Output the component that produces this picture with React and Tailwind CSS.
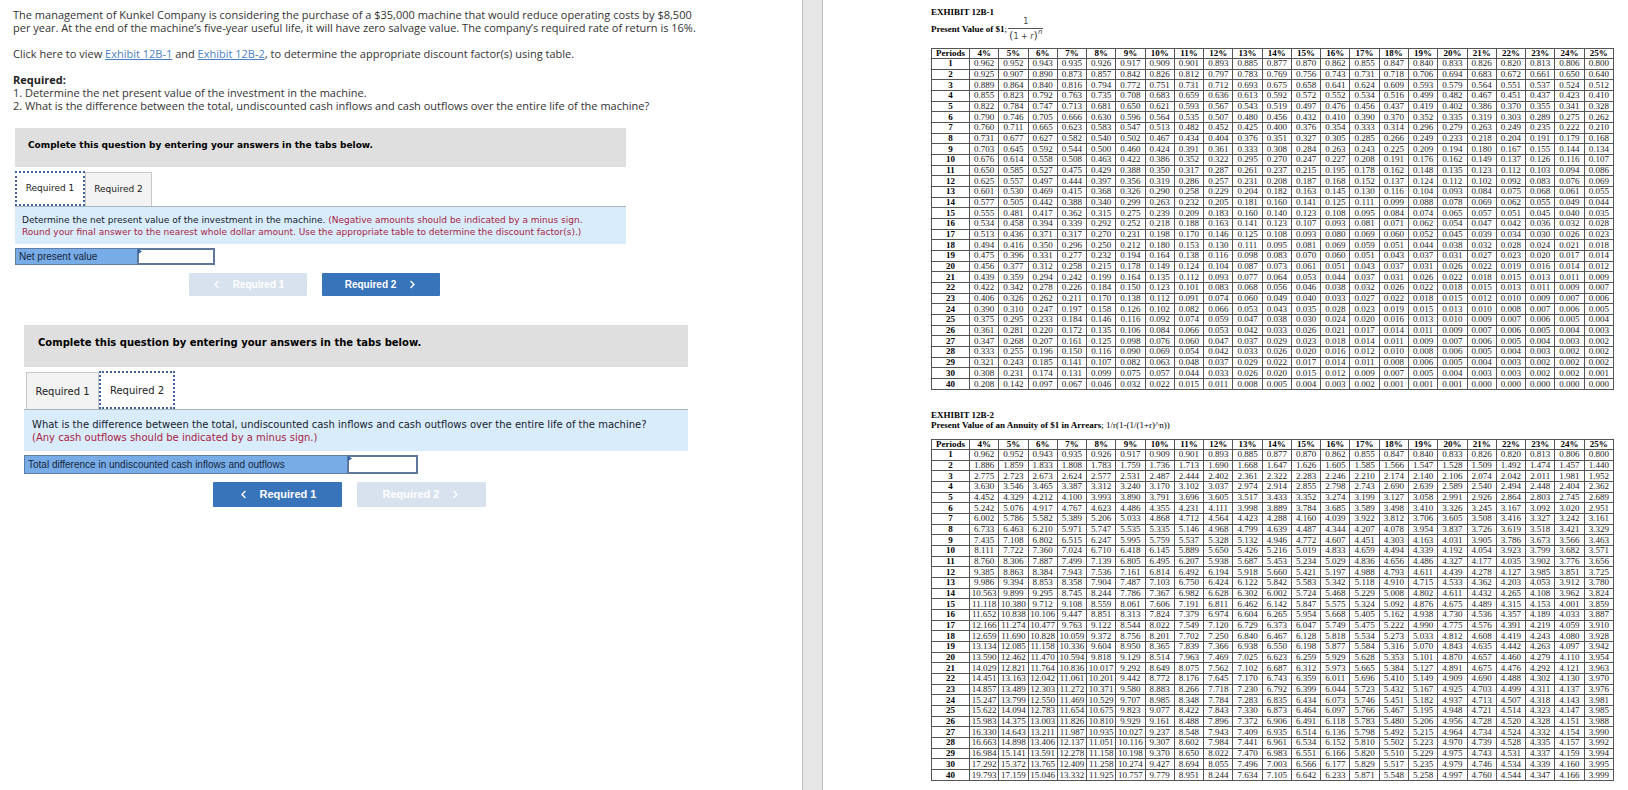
import React from 'react';
import clsx from 'clsx';
import { FaChevronLeft, FaChevronRight } from 'react-icons/fa';

const RATES = Array.from({ length: 22 }, (_, i) => i + 4);
const PERIODS = [...Array.from({ length: 30 }, (_, i) => i + 1), 40];

const presentValue = (rate, n) => 1 / Math.pow(1 + rate / 100, n);
const annuityValue = (rate, n) => (1 - presentValue(rate, n)) / (rate / 100);

const FactorTable = ({ label, factor }) => (
  <table aria-label={label} className="w-full h-[342px] table-fixed border-collapse border border-[#555] text-center text-[9px] leading-[9px] text-[#222]">
    <thead>
      <tr>
        <th className="w-[38px] border border-[#555] p-0 text-black">Periods</th>
        {RATES.map((rate) => (
          <th key={rate} className="border border-[#555] p-0 text-black">{rate}%</th>
        ))}
      </tr>
    </thead>
    <tbody>
      {PERIODS.map((n) => (
        <tr key={n}>
          <th className="border border-[#555] p-0 text-black">{n}</th>
          {RATES.map((rate) => (
            <td key={rate} className="border border-[#555] p-0">{factor(rate, n).toFixed(3)}</td>
          ))}
        </tr>
      ))}
    </tbody>
  </table>
);

const Tab = ({ active, large, children }) => (
  <button
    role="tab"
    aria-selected={active}
    className={clsx(
      'text-[#222]',
      large ? 'text-[10px]' : 'text-[9px]',
      active
        ? 'border-2 border-dotted border-[#3f62a0] bg-white'
        : 'border border-b-0 border-[#c8c8c8] bg-[#f3f3f3]',
      active && (large ? 'h-[38px] w-[76px]' : 'h-[35px] w-[70px]'),
      !active && (large ? 'h-[37px] w-[73px]' : 'h-[34px] w-[67px]')
    )}
  >
    {children}
  </button>
);

const NavButton = ({ disabled, large, back, children }) => (
  <button
    disabled={disabled}
    className={clsx(
      'flex items-center justify-center gap-3 rounded-[1px] font-bold text-white',
      large ? 'h-[25px] w-[129px] text-[11px]' : 'h-[23px] w-[118px] text-[10px]',
      disabled ? 'bg-[#d8e2ef]' : 'bg-[#3874b9]'
    )}
  >
    {back && <FaChevronLeft className="size-[9px]" />}
    {children}
    {!back && <FaChevronRight className="size-[9px]" />}
  </button>
);

const QuestionPanel = ({ id, large, active, question, hint, answerLabel }) => (
  <section className={clsx('w-full', large ? 'max-w-[664px]' : 'max-w-[611px]')}>
    <div
      className={clsx(
        "bg-[#dfdfdf] font-['DejaVu_Sans'] font-bold leading-[14px] text-black",
        large ? 'h-[42px] px-[14px] pt-[11px] text-[10px]' : 'h-[39px] px-[13px] pt-[10px] text-[9px]'
      )}
    >
      Complete this question by entering your answers in the tabs below.
    </div>
    <div role="tablist" className={clsx("mt-1 flex items-end font-['DejaVu_Sans']", large && 'pl-[2px]')}>
      <Tab large={large} active={active === 1}>Required 1</Tab>
      <Tab large={large} active={active === 2}>Required 2</Tab>
    </div>
    <div
      className={clsx(
        "border-t border-[#a9b4bb] bg-[#d9ecfb] font-['DejaVu_Sans'] text-[#16222e]",
        large ? 'h-[42px] px-[8px] pt-[8px] text-[10px] leading-[13px]' : 'h-[38px] pl-[7px] pr-[18px] pt-[7px] text-[9px] leading-[12px]'
      )}
    >
      {question} <span className={clsx('text-[#a8233f]', large && 'block')}>{hint}</span>
    </div>
    <div className={clsx('mt-1 flex text-[10px]', large ? 'h-[19px] w-[394px]' : 'h-[17px] w-[200px]')}>
      <label htmlFor={id} className="flex flex-1 items-center border border-r-0 border-[#5f7fa8] bg-[#78ace6] px-[3px] text-[#14263c]">
        {answerLabel}
      </label>
      <div className={clsx('relative', large ? 'w-[71px]' : 'w-[78px]')}>
        <input id={id} type="text" className="block h-full w-full border-2 border-[#5f7799] bg-white px-1" />
        <svg viewBox="0 0 4 5" className="absolute left-px top-px h-[5px] w-1" aria-hidden="true">
          <path d="M0 0L4 2.5L0 5Z" fill="#2f62a8" />
        </svg>
      </div>
    </div>
    <div className={clsx('mt-2 flex gap-[15px]', large ? 'pl-[189px]' : 'pl-[174px]')}>
      <NavButton large={large} back disabled={active === 1}>Required 1</NavButton>
      <NavButton large={large} disabled={active === 2}>Required 2</NavButton>
    </div>
  </section>
);

const Formula = () => (
  <span className="ml-px inline-flex flex-col items-center font-['DejaVu_Sans'] text-[8px] leading-[12px] text-[#444]">
    <span>1</span>
    <span className="flex items-start border-t border-[#555] px-px pt-px">
      <span className="text-[11px]">(</span>
      <span className="pt-px">1 + <i>r</i></span>
      <span className="text-[11px]">)</span>
      <i className="text-[7px] leading-[5px]">n</i>
    </span>
  </span>
);

const App = () => {
  return (
    <div className="flex min-h-screen bg-white font-['Liberation_Sans',sans-serif]">
      <main className="w-[802px] shrink pt-[8px]">
        <div className="pl-[13px] font-['Open_Sans',sans-serif] text-[11px] leading-[13px] text-[#333]">
          <p>
            The management of Kunkel Company is considering the purchase of a $35,000 machine that would reduce operating costs by $8,500
            <br />
            per year. At the end of the machine’s five-year useful life, it will have zero salvage value. The company’s required rate of return is 16%.
          </p>
          <p className="mt-[13px]">
            Click here to view <a href="#exhibit-1" className="text-[#4a7fc1] underline">Exhibit 12B-1</a> and{' '}
            <a href="#exhibit-2" className="text-[#4a7fc1] underline">Exhibit 12B-2</a>, to determine the appropriate discount factor(s) using table.
          </p>
          <p className="mt-[13px] font-bold text-[#222]">Required:</p>
          <p>1. Determine the net present value of the investment in the machine.</p>
          <p>2. What is the difference between the total, undiscounted cash inflows and cash outflows over the entire life of the machine?</p>
        </div>
        <div className="mt-[16px] pl-[15px]">
          <QuestionPanel
            id="npv"
            active={1}
            question="Determine the net present value of the investment in the machine."
            hint="(Negative amounts should be indicated by a minus sign. Round your final answer to the nearest whole dollar amount. Use the appropriate table to determine the discount factor(s).)"
            answerLabel="Net present value"
          />
        </div>
        <div className="mt-[29px] pl-[24px]">
          <QuestionPanel
            id="difference"
            large
            active={2}
            question="What is the difference between the total, undiscounted cash inflows and cash outflows over the entire life of the machine?"
            hint="(Any cash outflows should be indicated by a minus sign.)"
            answerLabel="Total difference in undiscounted cash inflows and outflows"
          />
        </div>
      </main>
      <div className="w-[21px] shrink-0 border-x border-[#bdbdbd] bg-[#e6e6e6]" />
      <aside className="flex-1 pl-[108px] pr-[14px] pt-[7px] font-['Liberation_Serif',serif] text-black">
        <section id="exhibit-1">
          <h2 className="text-[9px] font-bold leading-[10px]">EXHIBIT 12B-1</h2>
          <div className="mb-[7px] flex h-[24px] items-center text-[9px] leading-[10px]">
            <b>Present Value of $1</b>;<Formula />
          </div>
          <FactorTable label="Present value of $1" factor={presentValue} />
        </section>
        <section id="exhibit-2" className="mt-[20px]">
          <h2 className="text-[9px] font-bold leading-[10px]">EXHIBIT 12B-2</h2>
          <p className="mb-[9px] text-[9px] leading-[10px]">
            <b>Present Value of an Annuity of $1 in Arrears</b>; 1/r(1-(1/(1+r)^n))
          </p>
          <FactorTable label="Present value of an annuity of $1 in arrears" factor={annuityValue} />
        </section>
      </aside>
    </div>
  );
};

export default App;
